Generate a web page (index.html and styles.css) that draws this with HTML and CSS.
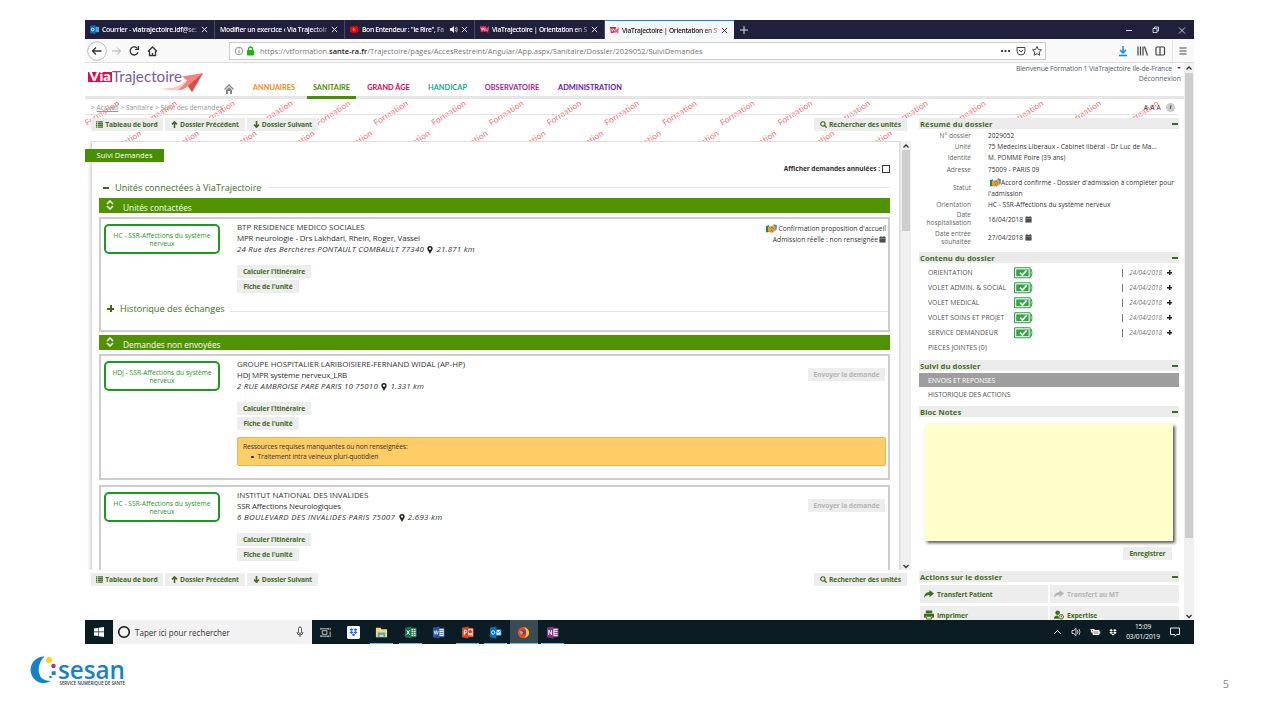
FILE: index.html
```html
<!DOCTYPE html>
<html lang="fr">
<head>
<meta charset="utf-8">
<title>ViaTrajectoire | Orientation en SSR</title>
<link rel="stylesheet" href="styles.css">
</head>
<body>
<svg class="defs" width="0" height="0">
  <symbol id="x" viewBox="0 0 8 8"><path d="M1 1l6 6M7 1l-6 6" stroke="currentColor" fill="none"/></symbol>
  <symbol id="via" viewBox="0 0 10 10"><path d="M0 1l7 0-1 6-5 1z" fill="#d81e5b"/><path d="M1 3l1.500 3 1-3 1.500 3 1-3" stroke="#fff" fill="none" stroke-width=".8"/><path d="M4 7.500L10 1 9 9 7.500 7z" fill="#ee5a6e"/></symbol>
  <symbol id="list" viewBox="0 0 8 8"><path d="M0 1h1.5M0 3h1.5M0 5h1.5M0 7h1.5M2.3 1H8M2.3 3H8M2.3 5H8M2.3 7H8" stroke="currentColor" stroke-width="1.4"/></symbol>
  <symbol id="up" viewBox="0 0 8 8"><path d="M4 8V2M1.2 3.8L4 1l2.8 2.8" stroke="currentColor" stroke-width="1.8" fill="none"/></symbol>
  <symbol id="down" viewBox="0 0 8 8"><path d="M4 0v6M1.2 4.2L4 7l2.8-2.8" stroke="currentColor" stroke-width="1.8" fill="none"/></symbol>
  <symbol id="search" viewBox="0 0 8 8"><circle cx="3.3" cy="3.3" r="2.5" stroke="currentColor" stroke-width="1.3" fill="none"/><path d="M5 5l2.5 2.5" stroke="currentColor" stroke-width="1.5"/></symbol>
  <symbol id="pin" viewBox="0 0 6 9"><path fill-rule="evenodd" d="M3 0a3 3 0 0 1 3 3C6 5 4 6 3 9 2 6 0 5 0 3a3 3 0 0 1 3-3zm0 1.7a1.3 1.3 0 1 0 0 2.6 1.3 1.3 0 0 0 0-2.6z" fill="#222"/></symbol>
  <symbol id="cal" viewBox="0 0 8 8"><path d="M.5 1h7v6.5h-7z" fill="#444"/><path d="M.5 2.7h7" stroke="#ccc" stroke-width=".6"/><path d="M2.2 0v2M5.8 0v2" stroke="#444"/><path d="M1 4.5h6M1 6h6" stroke="#777" stroke-width=".4"/></symbol>
  <symbol id="hand" viewBox="0 0 11 9"><path d="M0 2l3-.8V8L0 8.500z" fill="#2e8b3a"/><path d="M7.500 0L11 1.500 10.500 6 8.500 7z" fill="#3a8bd0"/><path d="M2 3l3.500-1L8 1.200 9.500 3v3L6.500 8.800 4 8.500 2 7z" fill="#e2a047"/><path d="M4 4.500l2-1.200L8 5M4.500 7.200L6 5.800M6 8l1.500-1.500" stroke="#8a5416" stroke-width=".6" fill="none"/></symbol>
  <symbol id="sort" viewBox="0 0 8 10"><path d="M1 4l3-3 3 3M1 6l3 3 3-3" stroke="#fff" stroke-width="1.5" fill="none"/></symbol>
  <symbol id="bat" viewBox="0 0 19 12"><rect x=".6" y=".8" width="15.6" height="10" rx=".6" fill="#fff" stroke="#2f9a41" stroke-width="1.1"/><path d="M17.3 2.2q1.4 3.6 0 7.2" stroke="#2f9a41" fill="none"/><path d="M2.2 2.4h12.4v6.8H2.2z" fill="#36a04a"/><path d="M6 5.6L8.4 8l4.2-4.6" stroke="#fff" stroke-width="1.6" fill="none"/></symbol>
  <symbol id="share" viewBox="0 0 11 9"><path d="M6 0l5 4-5 4V5.700C3.500 5.600 1.500 6.300 0 9 0 5 2.500 2.500 6 2.300z" fill="currentColor"/></symbol>
  <symbol id="drop" viewBox="0 0 10 9"><path d="M2.6 0L5 1.6 2.6 3.2.2 1.6zM7.4 0l2.4 1.6-2.4 1.6L5 1.6zM2.6 3.2L5 4.8 2.6 6.4.2 4.8zM7.4 3.2l2.4 1.6-2.4 1.6L5 4.8zM5 5.7l2.1 1.4L5 8.5 2.9 7.1z" fill="currentColor"/></symbol>
  <symbol id="chu" viewBox="0 0 8 8"><path d="M1.5 5.5L4 3l2.5 2.5" stroke="currentColor" stroke-width="1.3" fill="none"/></symbol>
  <symbol id="chd" viewBox="0 0 8 8"><path d="M1.5 3L4 5.500 6.500 3" stroke="currentColor" stroke-width="1.3" fill="none"/></symbol>
</svg>

<main class="screen">
  <div class="tabs">
    <div class="tab t1"><svg class="ic10" viewBox="0 0 10 10"><path d="M0 1l6-1v10L0 9z" fill="#0a6fc2"/><path d="M6 2h4v6H6z" fill="#4ba3e8"/><circle cx="3" cy="5" r="1.500" stroke="#fff" fill="none"/></svg><span class="tl">Courrier - viatrajectoire.idf@se:</span><svg class="ic8"><use href="#x"/></svg></div>
    <div class="tab t2"><span class="tl">Modifier un exercice ‹ Via Trajectoir</span><svg class="ic8"><use href="#x"/></svg></div>
    <div class="tab t3"><svg class="ic10" viewBox="0 0 10 10"><rect y="1.500" width="9" height="7" rx="2" fill="#f00"/><path d="M3.500 3.500v3L6 5z" fill="#fff"/></svg><span class="tl">Bon Entendeur : "le Rire", Fa</span><svg class="ic10 snd" viewBox="0 0 10 10"><path d="M1 3.500h2L5.500 1v8L3 6.500H1z" fill="#fff"/><path d="M7 3q1.500 2 0 4M8.300 2q2 3 0 6" stroke="#fff" fill="none" stroke-width=".8"/></svg><svg class="ic8"><use href="#x"/></svg></div>
    <div class="tab t4"><svg class="ic10"><use href="#via"/></svg><span class="tl">ViaTrajectoire | Orientation en S</span><svg class="ic8"><use href="#x"/></svg></div>
    <div class="tab t5 on"><svg class="ic10"><use href="#via"/></svg><span class="tl">ViaTrajectoire | Orientation en S</span><svg class="ic8"><use href="#x"/></svg></div>
    <svg class="plus" viewBox="0 0 8 8"><path d="M4 0v8M0 4h8" stroke="#ddd"/></svg>
    <svg class="win" width="62" height="10" viewBox="0 0 62 10" fill="none" stroke="#ddd"><path d="M1 5.500h6"/><path d="M28 3.500h4v4h-4zM29.500 3.500v-1.500h4v4H32" stroke-width=".9"/><path d="M54 2.500l6 6M60 2.500l-6 6" stroke-width=".9"/></svg>
  </div>

  <div class="toolbar">
    <svg class="navicons" width="80" height="22" viewBox="0 0 80 22" fill="none" stroke="#333" stroke-width="1.300"><circle cx="12" cy="11" r="9.300" fill="#fff" stroke="#aaa" stroke-width=".8"/><path d="M16.500 11h-9M11 7.500L7.500 11l3.500 3.500"/><path d="M27 11h8M32 7.500l3.500 3.500-3.500 3.500" stroke="#aaa" stroke-width="1"/><path d="M52.500 8.700a4 4 0 1 0 .5 3.500"/><path d="M53.500 6v3.500H50" stroke-width="1.200"/><path d="M63 11.500l4.500-4.500 4.500 4.500M64.500 11v4.500h6V11M67.500 15.500v-2.500"/></svg>
    <div class="url">
      <svg width="22" height="12" viewBox="0 0 22 12"><circle cx="5" cy="6" r="3.800" fill="none" stroke="#777" stroke-width=".8"/><path d="M5 5.500v2.700M5 3.500v1" stroke="#777"/><rect x="13" y="5" width="7" height="5.500" rx=".8" fill="#12bc00"/><path d="M14.500 5.500V4a2 2 0 0 1 4 0v1.500" fill="none" stroke="#12bc00" stroke-width="1.300"/></svg>
      <span class="addr">https://vtformation.<b>sante-ra.fr</b>/Trajectoire/pages/AccesRestreint/Angular/App.aspx/Sanitaire/Dossier/2029052/SuiviDemandes</span>
      <svg class="urlr" width="46" height="12" viewBox="0 0 46 12" fill="none" stroke="#444"><path d="M2 6h2M5.500 6h2M9 6h2" stroke-width="1.800"/><path d="M18 2.500h8v3.500a4 4 0 0 1-8 0zM20 5l2 2 2-2"/><path d="M38 1.500l1.400 3 3.100.4-2.300 2.200.6 3.100L38 8.700l-2.800 1.500.6-3.100-2.300-2.200 3.100-.4z"/></svg>
    </div>
    <svg class="tools" width="72" height="22" viewBox="0 0 72 22" fill="none" stroke="#444" stroke-width="1.200"><path d="M7 6v7M4 10l3 3 3-3M3 15.500h8" stroke="#0a84ff" stroke-width="1.400"/><path d="M22 6.500v9M24.500 6.500v9M27 6.500v9M28.500 6.500l3 9"/><rect x="40" y="7" width="8.500" height="8" rx="1"/><path d="M44 7v8"/><path d="M56.500 0v22" stroke="#ddd" stroke-width=".8"/><path d="M63.500 8h7M63.500 11h7M63.500 14h7" /></svg>
  </div>

  <div class="page">
    <div class="view">
      <header class="head">
        <svg class="logo" width="120" height="30" viewBox="0 0 120 30"><rect x="3" y="9" width="24" height="10" fill="#d8104e"/><text x="4" y="18" class="lgv" textLength="22" lengthAdjust="spacingAndGlyphs">Via</text><text x="27" y="19" class="lgt" textLength="70" lengthAdjust="spacingAndGlyphs">Trajectoire</text><path d="M76 25.500q16 1 25-8l3 5q-11 8-28 3z" fill="#f9c9c4"/><path d="M97 13.500l21-3.500-11 19-4-6q-4 4-11 4.500 6-3.500 10-10z" fill="#f0857f"/><path d="M118 10l-11 19-4-6z" fill="#e4474a"/></svg>
        <nav class="nav">
          <svg class="home" width="10" height="10" viewBox="0 0 10 10"><path d="M.5 5.500L5 1l4.500 4.500" stroke="#888" stroke-width="1.300" fill="none"/><path d="M2 6l3-3 3 3v4H6V7H4v3H2z" fill="#888"/></svg>
          <span class="n1">ANNUAIRES</span><span class="n2">SANITAIRE</span><span class="n3">GRAND ÂGE</span><span class="n4">HANDICAP</span><span class="n5">OBSERVATOIRE</span><span class="n6">ADMINISTRATION</span>
        </nav>
        <div class="user"><div><span class="u1">Bienvenue Formation 1 ViaTrajectoire Ile-de-France</span><i class="caret"></i></div><div class="out">Déconnexion</div></div>
      </header>
      <svg class="mark" width="1099" height="70" viewBox="85 99 1099 70" id="mark"></svg>
      <div class="crumb"><span class="cr">&gt; <u>Accueil</u> &gt; Sanitaire &gt; Suivi des demandes</span><span class="aaa">A A A</span><i class="info">i</i></div>
      <div class="cols">
        <section class="left">
          <div class="btns"><span class="btn b1"><svg><use href="#list"/></svg>Tableau de bord</span><span class="btn b2"><svg><use href="#up"/></svg>Dossier Précédent</span><span class="btn b3"><svg><use href="#down"/></svg>Dossier Suivant</span><span class="btn b4"><svg><use href="#search"/></svg>Rechercher des unités</span></div>
          <div class="frame">
            <div class="card">
              <div class="label"><span>Suivi Demandes</span></div>
              <div class="filter"><b>Afficher demandes annulées :</b><i class="cb"></i></div>
              <div class="h h1"><i class="minus"></i><span>Unités connectées à ViaTrajectoire</span><i class="rule"></i></div>
              <div class="bar"><svg><use href="#sort"/></svg><span class="bt1">Unités contactées</span></div>
              <div class="unit un1">
                <div class="tag">HC - SSR-Affections du système<br>nerveux</div>
                <div class="desc"><p class="l1">BTP RESIDENCE MEDICO SOCIALES</p><p class="l2">MPR neurologie - Drs Lakhdari, Rhein, Roger, Vassel</p><p class="ad a1">24 Rue des Berchères PONTAULT COMBAULT 77340 <svg><use href="#pin"/></svg> 21.871 km</p><span class="btn c1">Calculer l'itinéraire</span><span class="btn c2">Fiche de l'unité</span></div>
                <div class="status"><p><svg class="hd"><use href="#hand"/></svg><span class="s1">Confirmation proposition d'accueil</span></p><p><span class="s2">Admission réelle : non renseignée</span> <svg class="cal"><use href="#cal"/></svg></p></div>
                <div class="h h2"><i class="pls"></i><span>Historique des échanges</span><i class="rule low"></i></div>
              </div>
              <div class="bar bar2"><svg><use href="#sort"/></svg><span class="bt2">Demandes non envoyées</span></div>
              <div class="unit un2">
                <div class="tag">HDJ - SSR-Affections du système<br>nerveux</div>
                <div class="desc"><p class="l3">GROUPE HOSPITALIER LARIBOISIERE-FERNAND WIDAL (AP-HP)</p><p class="l4">HDJ MPR système nerveux_LRB</p><p class="ad a2">2 RUE AMBROISE PARE PARIS 10 75010 <svg><use href="#pin"/></svg> 1.331 km</p><span class="btn c1">Calculer l'itinéraire</span><span class="btn c2">Fiche de l'unité</span></div>
                <span class="btn send">Envoyer la demande</span>
                <div class="alert"><p>Ressources requises manquantes ou non renseignées:</p><p class="li"><i></i>Traitement intra veineux pluri-quotidien</p></div>
              </div>
              <div class="unit un3">
                <div class="tag">HC - SSR-Affections du système<br>nerveux</div>
                <div class="desc"><p class="l5">INSTITUT NATIONAL DES INVALIDES</p><p class="l6">SSR Affections Neurologiques</p><p class="ad a3">6 BOULEVARD DES INVALIDES PARIS 75007 <svg><use href="#pin"/></svg> 2.693 km</p><span class="btn c1">Calculer l'itinéraire</span><span class="btn c2">Fiche de l'unité</span></div>
                <span class="btn send">Envoyer la demande</span>
              </div>
            </div>
            <div class="sb"><svg><use href="#chu"/></svg><i class="th"></i><svg class="dn"><use href="#chd"/></svg></div>
          </div>
          <div class="btns bot"><span class="btn b1"><svg><use href="#list"/></svg>Tableau de bord</span><span class="btn b2"><svg><use href="#up"/></svg>Dossier Précédent</span><span class="btn b3"><svg><use href="#down"/></svg>Dossier Suivant</span><span class="btn b4"><svg><use href="#search"/></svg>Rechercher des unités</span></div>
        </section>
        <aside class="side">
          <h3><span>Résumé du dossier</span><i></i></h3>
          <dl>
            <dt>N° dossier</dt><dd>2029052</dd>
            <dt>Unité</dt><dd class="d2">75 Medecins Liberaux - Cabinet libéral - Dr Luc de Ma...</dd>
            <dt>Identité</dt><dd>M. POMME Poire (39 ans)</dd>
            <dt>Adresse</dt><dd class="d4">75009 - PARIS 09</dd>
            <dt>Statut</dt><dd class="d5"><svg class="hd"><use href="#hand"/></svg>Accord confirmé - Dossier d'admission à compléter pour<br>l'admission</dd>
            <dt>Orientation</dt><dd class="d6">HC - SSR-Affections du système nerveux</dd>
            <dt class="two">Date<br>hospitalisation</dt><dd>16/04/2018 <svg class="cal"><use href="#cal"/></svg></dd>
            <dt class="two">Date entrée<br>souhaitée</dt><dd>27/04/2018 <svg class="cal"><use href="#cal"/></svg></dd>
          </dl>
          <h3><span class="k2">Contenu du dossier</span><i></i></h3>
          <div class="menu">
            <div><span>ORIENTATION</span><svg><use href="#bat"/></svg><em>24/04/2018</em><b></b></div>
            <div><span class="m2">VOLET ADMIN. &amp; SOCIAL</span><svg><use href="#bat"/></svg><em>24/04/2018</em><b></b></div>
            <div><span>VOLET MEDICAL</span><svg><use href="#bat"/></svg><em>24/04/2018</em><b></b></div>
            <div><span>VOLET SOINS ET PROJET</span><svg><use href="#bat"/></svg><em>24/04/2018</em><b></b></div>
            <div><span>SERVICE DEMANDEUR</span><svg><use href="#bat"/></svg><em>24/04/2018</em><b></b></div>
            <div><span>PIECES JOINTES (0)</span></div>
          </div>
          <h3 class="hs"><span>Suivi du dossier</span><i></i></h3>
          <div class="menu mm"><div class="sel"><span>ENVOIS ET REPONSES</span></div><div><span>HISTORIQUE DES ACTIONS</span></div></div>
          <h3 class="hb"><span>Bloc Notes</span><i></i></h3>
          <div class="note"></div>
          <span class="btn save">Enregistrer</span>
          <h3 class="ha"><span>Actions sur le dossier</span><i></i></h3>
          <div class="acts">
            <span><svg><use href="#share"/></svg>Transfert Patient</span><span class="off"><svg><use href="#share"/></svg>Transfert au MT</span>
            <span><svg viewBox="0 0 11 10"><path d="M2 0h7v3H2zM0 3.500h11V8H9V6H2v2H0z" fill="currentColor"/><path d="M2.800 6.800h5.400v2.700H2.800z" fill="none" stroke="currentColor"/></svg>Imprimer</span><span><svg viewBox="0 0 11 10"><circle cx="4" cy="2.500" r="2.500" fill="currentColor"/><path d="M0 9q0-3.500 4-3.500L6 9z" fill="currentColor"/><circle cx="8" cy="7" r="2.500" fill="none" stroke="currentColor"/><path d="M8 5.500v1.700M8 8v.7" stroke="currentColor"/></svg>Expertise</span>
          </div>
        </aside>
      </div>
    </div>
    <div class="psb"><svg><use href="#chu"/></svg><i class="th"></i><svg class="dn"><use href="#chd"/></svg></div>
  </div>

  <div class="task">
    <svg class="start" width="28" height="24" viewBox="0 0 28 24"><path d="M9 8.500l4-.6v3.700H9zM13.600 7.800L19 7v4.600h-5.400zM9 12.300h4V16l-4-.6zM13.600 12.300H19V17l-5.400-.8z" fill="#fff"/></svg>
    <div class="srch"><svg width="14" height="14" viewBox="0 0 14 14"><circle cx="7" cy="7" r="5.300" fill="none" stroke="#111" stroke-width="1.500"/></svg><span>Taper ici pour rechercher</span><svg class="mic" width="8" height="12" viewBox="0 0 8 12"><rect x="2.500" y="1" width="3" height="6.500" rx="1.500" fill="none" stroke="#333" stroke-width=".8"/><path d="M1 6q0 3 3 3t3-3M4 9v2" fill="none" stroke="#333" stroke-width=".8"/></svg></div>
    <div class="apps">
      <span><svg viewBox="0 0 14 14"><path d="M3.500 5h5v4h-5zM2 4V2M10 4V2M2 3h8M2 12v-2M10 12v-2M2 11h8M12 2v2.500M12 6v6" fill="none" stroke="#ddd" stroke-width=".9"/></svg></span>
      <span><svg viewBox="0 0 14 14"><rect width="14" height="14" rx="1.500" fill="#fff"/><path d="M4.800 2.500L7 4 4.800 5.500 2.600 4zM9.200 2.500L11.400 4 9.200 5.500 7 4zM4.800 5.500L7 7 4.800 8.500 2.600 7zM9.200 5.500L11.400 7 9.200 8.500 7 7zM7 8l2 1.500-2 1.500-2-1.500z" fill="#1f63f2"/></svg></span>
      <span class="run"><svg viewBox="0 0 14 14"><path d="M1 2h5l1 1.500h6V12H1z" fill="#f7d775"/><path d="M3 12V7h8v5H9V9.500H5V12z" fill="#38a9d8"/></svg></span>
      <span class="run"><svg viewBox="0 0 14 14"><path d="M7 2.500h6v9H7z" fill="#fff" stroke="#1e7145"/><path d="M7 5h6M7 7h6M7 9h6M10 3v9" stroke="#1e7145" stroke-width=".8"/><path d="M1 2l7-1.500v13L1 12z" fill="#1e7145"/><path d="M3 4.700l3 4.600M6 4.700L3 9.300" stroke="#fff"/></svg></span>
      <span><svg viewBox="0 0 14 14"><path d="M7 2.500h6v9H7z" fill="#fff" stroke="#2b579a"/><path d="M8 5h4M8 7h4M8 9h4" stroke="#2b579a" stroke-width=".8"/><path d="M1 2l7-1.500v13L1 12z" fill="#2b579a"/><path d="M2.300 5l1 4 1.200-4 1.200 4 1-4" stroke="#fff" fill="none" stroke-width=".8"/></svg></span>
      <span class="run"><svg viewBox="0 0 14 14"><path d="M7 2.500h6v9H7z" fill="#fff" stroke="#d24726"/><circle cx="10" cy="6" r="2" fill="#d24726"/><path d="M8 10h4" stroke="#d24726"/><path d="M1 2l7-1.500v13L1 12z" fill="#d24726"/><path d="M3.500 10V4.500h1.200a1.400 1.400 0 0 1 0 3H3.500" stroke="#fff" fill="none"/></svg></span>
      <span class="run"><svg viewBox="0 0 14 14"><path d="M7 4h6v6H7z" fill="#fff" stroke="#0072c6"/><path d="M7 4.500l3 3 3-3" stroke="#0072c6" fill="none"/><path d="M1 2l7-1.500v13L1 12z" fill="#0072c6"/><circle cx="4.500" cy="7" r="1.800" stroke="#fff" fill="none"/></svg></span>
      <span class="act"><svg viewBox="0 0 14 14"><circle cx="7" cy="7.200" r="5.800" fill="#ff7a1a"/><path d="M2 3q4-3 6 0 5-1 4.500 6Q10 14 5 12.500 0 10 2 3z" fill="#f0402c"/><path d="M8 1q5 2 5 7-1 4-5 4.500 4-5 0-11.500z" fill="#ffc61a"/><circle cx="7" cy="7" r="2.600" fill="#3a4fb5"/><path d="M2.500 5q3 0 4.500 2-2 .5-1 2.500Q3 9 2.500 5z" fill="#ff9b1f"/></svg></span>
      <span class="run"><svg viewBox="0 0 14 14"><path d="M7 2.500h6v9H7z" fill="#fff" stroke="#80397b"/><path d="M9 5h4M9 7h4M9 9h4" stroke="#80397b"/><path d="M1 2l7-1.500v13L1 12z" fill="#80397b"/><path d="M3 9.500v-5l3 5v-5" stroke="#fff" fill="none"/></svg></span>
    </div>
    <div class="tray">
      <svg width="70" height="12" viewBox="0 0 70 12" fill="none" stroke="#fff"><path d="M1 8l3.500-3.500L8 8"/><path d="M19 4.500h1.500L23 2.500v7l-2.500-2H19z" stroke-width=".8"/><path d="M24.500 4q1 2 0 4M26 3q2 3 0 6" stroke-width=".7"/><path d="M40 4.500h6v4h-6z" fill="#bbb"/><path d="M46.800 5.500v2"/><path d="M37.500 3.500h4M38.500 3v3h2" stroke-width="1.200"/></svg>
      <svg class="db" width="8" height="7"><use href="#drop"/></svg>
      <div class="clock"><span>15:09</span><span>03/01/2019</span></div>
      <svg class="nt" width="10" height="11" viewBox="0 0 10 11"><path d="M.5 1h9v6.500h-3L5 9.200V7.500H.5z" fill="none" stroke="#fff" stroke-width=".9"/></svg>
    </div>
  </div>
</main>
<footer class="foot">
  <svg width="100" height="36" viewBox="28 652 100 36"><path d="M44.500 656.500A13.300 13.300 0 1 0 51 681q-10 0-12-8-1.500-10 5.500-16.500z" fill="#1783c6"/><circle cx="49" cy="660" r="3" fill="#fbd50c"/><circle cx="53.500" cy="666" r="2.300" fill="#a13590"/><path d="M51.500 671.500l4-.5.300 3.800-4 .5z" fill="#1783c6"/><circle cx="50.500" cy="677" r="1.300" fill="#1783c6"/><text class="ses" x="58" y="678.500" textLength="67" lengthAdjust="spacingAndGlyphs">sesan</text><text class="sns" x="59.500" y="685" textLength="65.500" lengthAdjust="spacingAndGlyphs">SERVICE NUMÉRIQUE DE SANTÉ</text></svg>
  <span class="num">5</span>
</footer>
<script src="mark.js"></script>
</body>
</html>
```
FILE: mark.js
```
// Repeats the "Formation" training watermark behind the page content.
(function () {
  var svg = document.getElementById('mark');
  function put(x, y) {
    var t = document.createElementNS('http://www.w3.org/2000/svg', 'text');
    t.setAttribute('transform', 'translate(' + x + ' ' + y + ') rotate(-33)');
    t.textContent = 'Formation';
    svg.appendChild(t);
  }
  for (var i = 0; i < 19; i++) put(102.5 + i * 57.75, 113.5);
  for (var j = 0; j < 14; j++) put(124.5 + j * 57.75, 143.5);
})();
```
FILE: styles.css
```css
* { box-sizing: border-box; }
body { margin: 0; width: 1280px; height: 720px; overflow: hidden; background: #fff; font-family: "Open Sans", "Noto Sans", sans-serif; font-size: 6.5px; color: #333; display: flex; flex-direction: column; }
p, dl, dd, h3 { margin: 0; }
i { font-style: normal; }
svg { flex: none; display: block; }
span { white-space: nowrap; }
.defs { position: absolute; }
.screen { margin: 20px 0 0 85px; width: 1109px; height: 624px; flex: none; display: flex; flex-direction: column; }

.tabs { height: 19px; background: #20203c; display: flex; align-items: center; color: #fff; flex: none; }
.tab { width: 130px; height: 19px; display: flex; align-items: center; padding: 0 6px 0 5px; border-right: 1px solid #4a4a60; gap: 3px; }
.tab .tl { flex: 1; font-size: 6.800px; font-weight: 600; letter-spacing: -.24px; mask-image: linear-gradient(90deg, #000 84%, rgba(0, 0, 0, .35)); }
.t2 .tl { letter-spacing: -.25px; }
.t3 .tl { letter-spacing: -.36px; }
.t4 .tl, .t5 .tl { font-size: 6.700px; letter-spacing: -.3px; }
.ic10 { width: 9px; height: 9px; }
.ic8 { width: 7px; height: 7px; }
.tab.on { background: #f5f6f7; color: #222; border-top: 1px solid #0a84ff; width: 129px; border-right: 0; }
.plus { width: 8px; height: 8px; margin-left: 6px; }
.win { margin-left: auto; margin-right: 7px; }

.toolbar { height: 24px; background: #f9f9fa; border-bottom: 1px solid #ddd; display: flex; align-items: center; flex: none; }
.url { margin-left: 64px; width: 817px; height: 18px; border: 1px solid #ccc; background: #fff; display: flex; align-items: center; padding-left: 4px; }
.addr { margin-left: 4px; font-size: 7.500px; color: #777; letter-spacing: .01px; }
.addr b { color: #222; font-weight: 600; }
.urlr { margin-left: auto; }
.tools { margin-left: 70px; }

.page { height: 557px; display: flex; overflow: hidden; flex: none; }
.view { width: 1099px; position: relative; height: 557px; overflow: hidden; }
.head { height: 36px; border-bottom: 3px solid #e6e6e6; display: flex; }
.lgv { font: 900 12.500px "Lato", sans-serif; fill: #fff; }
.lgt { font: 15px "Lato", sans-serif; fill: #7b5aa0; }
.nav { display: flex; height: 36px; padding-top: 18px; margin-left: 19px; font: 700 7.400px/14px "Lato", sans-serif; }
.home { margin: 3px 0 0; }
.nav span { height: 18px; text-align: center; }
.n1 { color: #f08a1d; width: 60px; margin-left: 10px; }
.n2 { color: #478f00; width: 49px; border-bottom: 3px solid #478f00; margin-left: 3px; }
.n3 { color: #e0004d; width: 61px; margin-left: 2px; }
.n4 { color: #1ba795; width: 57px; }
.n5 { color: #b0208f; width: 72px; }
.n6 { color: #6a11b5; width: 84px; }
.user { margin-left: auto; padding-top: 1px; width: 180px; color: #526070; font-size: 6.900px; line-height: 10px; text-align: right; padding-right: 3px; }
.u1 { letter-spacing: -.16px; }
.caret { display: inline-block; border: 2.500px solid transparent; border-top-color: #444; border-bottom: 0; margin: 0 0 2px 5px; }
.mark { position: absolute; left: 0; top: 36px; z-index: 0; }
.mark text { font: 8.400px "Lato", sans-serif; fill: #f97070; text-anchor: middle; letter-spacing: .2px; dominant-baseline: middle; }
.crumb { height: 16px; margin-right: 6px; border-bottom: 1px solid #e4e4e4; display: flex; align-items: center; padding: 2px 0 0 6px; color: #999; font-size: 6.700px; position: relative; }
.aaa { margin-left: auto; color: #333; letter-spacing: .2px; }
.info { width: 9px; height: 9px; border-radius: 50%; background: #ccc; margin: 0 3px 0 5px; font: italic 700 7px/9px "Liberation Serif", serif; text-align: center; color: #444; }
.cols { display: flex; position: relative; }
.left { width: 826px; }
.btns { display: flex; gap: 2px; padding: 3px 4px 0 6px; height: 26px; }
.btn { display: flex; align-items: center; justify-content: center; gap: 2px; background: #ededed; color: #3f6b1c; font-weight: 700; height: 13px; font-size: 6.700px; white-space: nowrap; letter-spacing: -.1px; }
.btn svg { width: 7px; height: 7px; }
.b1 { width: 72px; } .b2 { width: 80px; } .b3 { width: 71px; } .b4 { width: 93px; margin-left: auto; }
.frame { display: flex; height: 429px; overflow: hidden; }
.card { width: 809px; margin: 0 1px 0 6px; background: #fff; border: solid #ddd; border-width: 1px 1px 0; box-shadow: 0 0 4px #bbb; padding-left: 7px; height: 440px; }
.label { width: 79px; height: 13px; margin: 7px 0 0 -14px; background: #478f00; color: #fff; text-align: center; line-height: 13px; font-size: 7.500px; position: relative; }
.filter { display: flex; justify-content: flex-end; align-items: center; height: 13px; padding-right: 9px; gap: 2px; font-size: 6.600px; letter-spacing: -.05px; }
.cb { width: 8px; height: 8px; border: 1px solid #333; }
.h { display: flex; align-items: center; color: #44702a; font-size: 9.200px; height: 15px; letter-spacing: -.02px; }
.h1 { margin: 5px 9px 0 4px; }
.h1 .minus { width: 6px; height: 2px; background: #3f6b1c; margin-right: 6px; }
.rule { flex: 1; height: 1px; background: #e4e4e4; margin-left: 5px; }
.low { margin-top: 6px; }
.bar { width: 791px; height: 15px; background: #4f9400; color: #fff; display: flex; align-items: center; font-size: 8.300px; margin-top: 3px; padding-left: 7px; }
.bar svg { width: 8px; height: 10px; margin-right: 9px; margin-top: -1px; }
.bar span { padding-top: 3px; }
.bar2 { margin-top: 3px; }
.unit { width: 791px; border: 2px solid #d0cccc; margin-top: 4px; display: grid; grid-template-columns: 136px 1fr 150px; align-content: start; }
.un1 { height: 115px; } .un2 { height: 126px; } .un3 { height: 126px; margin-top: 5px; }
.tag { width: 116px; height: 30px; margin: 5px 0 0 3px; border: 2px solid #1a9a1e; border-radius: 5px; color: #1a9a1e; text-align: center; line-height: 7.500px; padding-top: 6px; font-size: 6.600px; letter-spacing: .04px; }
.desc { padding-top: 3px; font-size: 7.900px; line-height: 11px; }
.desc p { white-space: nowrap; }
.desc .l2 { letter-spacing: -.13px; }
.desc .l4, .desc .l6 { letter-spacing: -.16px; }
.desc .ad { font-style: italic; display: flex; align-items: center; white-space: pre; letter-spacing: .2px; }
.desc .a3 { letter-spacing: .3px; }
.ad svg { width: 6px; height: 8px; margin: 0 1px; }
.c1 { width: 74px; margin-top: 10px; }
.c2 { width: 62px; margin-top: 2px; }
.status { padding: 4px 2px 0 0; text-align: right; line-height: 11px; font-size: 6.700px; }
.status p { display: flex; justify-content: flex-end; align-items: center; white-space: nowrap; gap: 1px; }
.hd { width: 11px; height: 9px; }
.cal { width: 7px; height: 7px; }
.h2 { grid-column: 1 / 4; margin: 8px 0 0 6px; }
.pls { width: 7px; height: 7px; margin-right: 6px; background: linear-gradient(#3f6b1c, #3f6b1c) center / 7px 2px no-repeat, linear-gradient(#3f6b1c, #3f6b1c) center / 2px 7px no-repeat; }
.send { width: 77px; color: #b5b5b5; margin: 12px 0 0 auto; margin-right: 3px; }
.alert { grid-column: 2 / 4; margin: 7px 2px 0 0; height: 29px; background: #fc6; border: 1px solid #e9b850; border-radius: 2px; padding: 4px 5px; line-height: 10px; font-size: 6.700px; letter-spacing: -.1px; }
.li { padding-left: 8px; display: flex; align-items: center; gap: 4px; }
.li i { width: 2.500px; height: 2.500px; border-radius: 50%; background: #222; }
.sb { width: 10px; background: #f0f0f0; display: flex; flex-direction: column; align-items: center; padding-top: 1px; }
.sb svg, .psb svg { width: 8px; height: 8px; }
.sb .th { width: 8px; height: 81px; background: #cdcdcd; }
.sb .dn, .dn { margin-top: auto; }
.bot { padding-top: 3px; position: relative; background: #fff; }
.side { margin-left: 8px; width: 260px; padding-top: 3px; display: flex; flex-direction: column; }
h3 { height: 11px; background: #ebebeb; display: flex; align-items: center; justify-content: space-between; color: #3f6b1c; font-size: 7.600px; padding: 0 1px; flex: none; letter-spacing: .08px; }
h3 i { width: 6px; height: 2px; background: #3f6b1c; }
dl { display: grid; grid-template-columns: 52px 1fr; column-gap: 17px; grid-template-rows: 11px 11px 11px 13px 23px 11px 18.500px 18.500px; align-items: center; height: 123px; padding-top: 1px; color: #666; }
dt { text-align: right; }
dd { color: #333; white-space: nowrap; display: block; letter-spacing: .05px; }
dd svg { display: inline-block; vertical-align: -1px; }
.two { line-height: 8px; white-space: nowrap; }
.d5 { line-height: 11px; }
.d5 .hd { margin-left: 2px; vertical-align: -2px; }
.menu { padding-top: 2px; height: 97px; color: #555; }
.menu div { height: 15px; display: flex; align-items: center; padding-left: 9px; font-size: 6.800px; letter-spacing: .02px; }
.menu div span { width: 86px; }
.menu svg { width: 19px; height: 12px; }
.menu em { margin-left: auto; border-left: 1px solid #777; padding-left: 6px; line-height: 8px; font-size: 6.400px; color: #777; }
.menu b { width: 5px; height: 5px; margin: 0 7px 0 5px; background: linear-gradient(#222, #222) center / 5px 1.500px no-repeat, linear-gradient(#222, #222) center / 1.500px 5px no-repeat; }
.mm { height: 35px; }
.menu .sel { background: #9e9e9e; color: #fff; height: 14px; }
.mm div { letter-spacing: -.08px; }
.note { width: 248px; height: 117px; background: #ffc; margin: 7px 0 0 6px; box-shadow: 2px 2px 3px #555; flex: none; }
.save { width: 49px; margin: 6px 7px 11px auto; flex: none; }
.acts { display: grid; grid-template-columns: 128px 129px; gap: 3px 2px; padding: 3px 0 0 1px; }
.acts span { height: 18px; background: #ededed; color: #3f6b1c; font-weight: 700; display: flex; align-items: center; gap: 3px; padding-left: 4px; font-size: 6.700px; letter-spacing: -.1px; }
.acts svg { width: 10px; height: 10px; }
.acts .off { color: #b5b5b5; }
.psb { width: 10px; background: #f0f0f0; display: flex; flex-direction: column; align-items: center; padding-top: 1px; }
.psb .th { width: 8px; height: 465px; background: #cdcdcd; margin-top: 1px; }

.task { height: 24px; background: #0c1c24; display: flex; flex: none; align-items: center; position: relative; }
.srch { width: 199px; height: 24px; background: #f2f2f2; display: flex; align-items: center; padding: 0 8px 0 4px; }
.srch span { font-size: 8.050px; margin-left: 4px; color: #333; }
.mic { margin-left: auto; }
.apps { display: flex; margin-left: -1px; }
.apps span { width: 28.400px; height: 24px; display: flex; align-items: center; justify-content: center; }
.apps svg { width: 13px; height: 13px; }
.apps .run { background: linear-gradient(#76b9ed, #76b9ed) center bottom / 23px 1px no-repeat; }
.apps .act { background: #3b4b53; box-shadow: inset 0 -1px #76b9ed; }
.tray { margin-left: auto; display: flex; align-items: center; color: #fff; }
.db { margin-left: -14px; }
.clock { width: 44px; margin: 0 5px 0 4px; font-size: 6.600px; line-height: 10.500px; text-align: center; display: flex; flex-direction: column; letter-spacing: -.15px; }
.nt { margin-right: 14px; }

.foot { display: flex; height: 76px; padding: 8px 0 0 28px; }
.ses { font: 600 25px "Open Sans", sans-serif; fill: #1783c6; }
.sns { font: 600 4.800px "Open Sans", sans-serif; fill: #333; }
.num { margin: 24px 0 0 auto; margin-right: 51px; font-size: 11px; color: #888; }
```
